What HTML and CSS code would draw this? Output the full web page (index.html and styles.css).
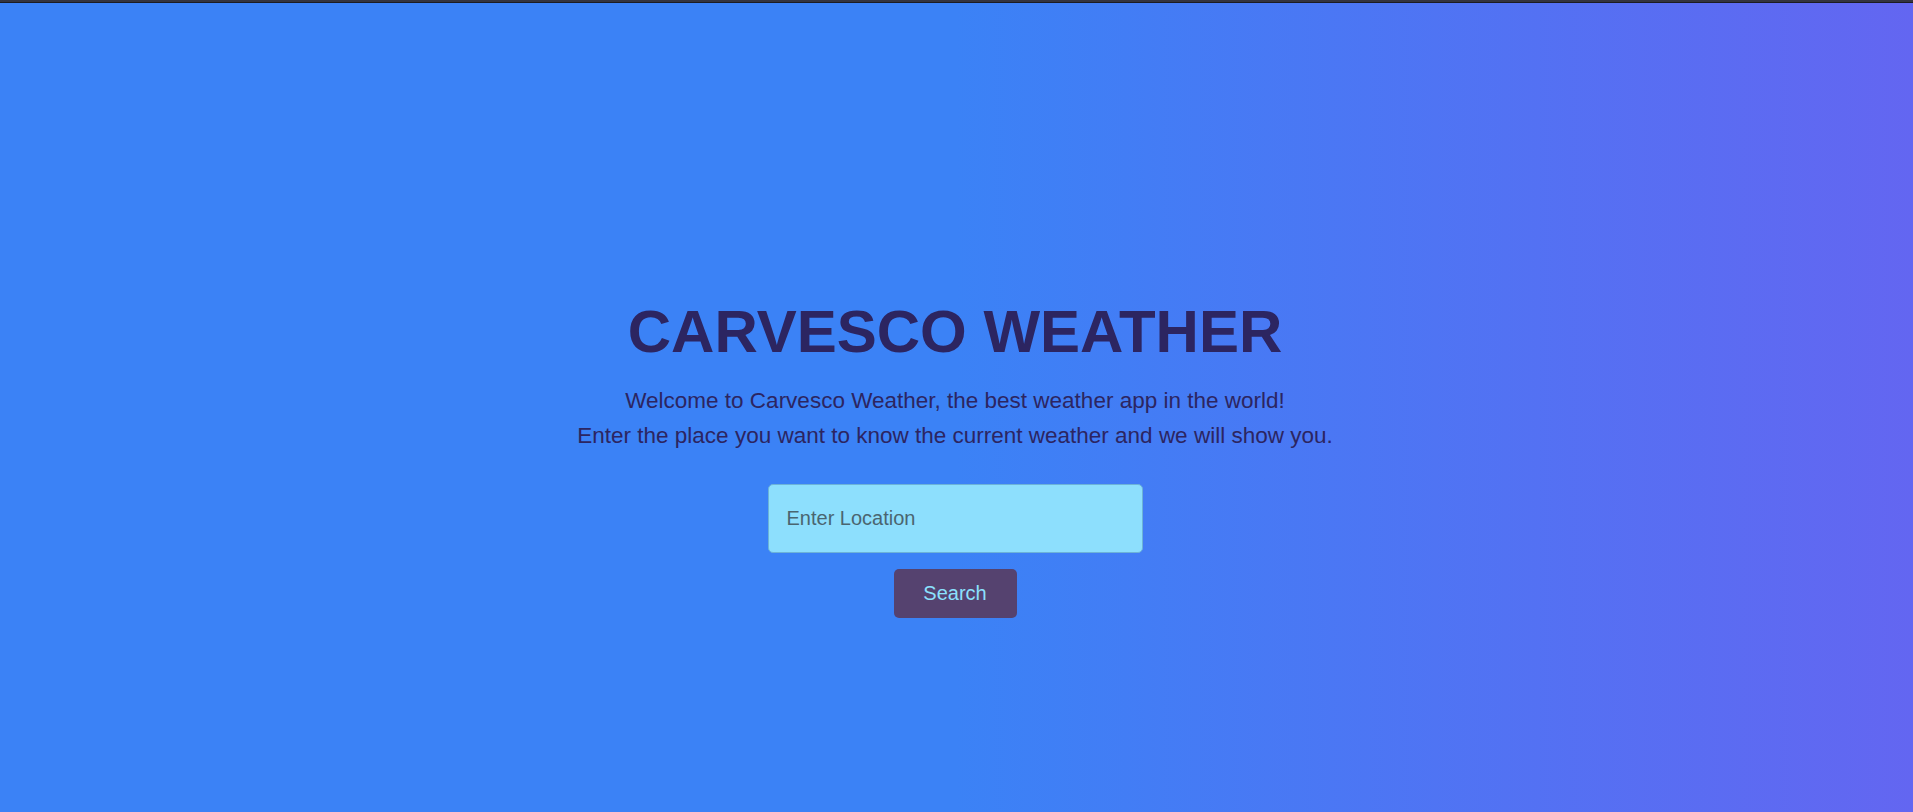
FILE: index.html
```html
<!DOCTYPE html>
<html lang="en">
<head>
<meta charset="utf-8">
<title>Carvesco Weather</title>
<link rel="stylesheet" href="styles.css">
</head>
<body>
<div class="topbar"></div>
<main class="hero">
  <h1 class="title">CARVESCO WEATHER</h1>
  <p class="intro">Welcome to Carvesco Weather, the best weather app in the world!<br>Enter the place you want to know the current weather and we will show you.</p>
  <form class="search" onsubmit="return false;">
    <input class="location" type="text" placeholder="Enter Location">
    <button class="search-btn" type="submit">Search</button>
  </form>
</main>
</body>
</html>
```
FILE: styles.css
```css
html, body {
  margin: 0;
  padding: 0;
}
body {
  min-height: 100vh;
  background: linear-gradient(to right, #3b82f6 50%, #6366f1 100%);
  font-family: "Liberation Sans", Arial, sans-serif;
  color: #2c2561;
}
.topbar {
  height: 2px;
  background: #34343f;
  border-bottom: 1px solid #1c1c22;
}
.hero {
  display: flex;
  flex-direction: column;
  align-items: center;
  text-align: center;
  padding-top: 299px;
  padding-right: 3px;
}
.title {
  margin: 0;
  font-size: 60px;
  line-height: 60px;
  font-weight: 700;
  color: #2c2561;
}
.intro {
  margin: 21px 0 0;
  font-size: 22.5px;
  line-height: 35.3px;
  color: #2c2561;
}
.search {
  display: flex;
  flex-direction: column;
  align-items: center;
  margin-top: 30px;
}
.location {
  box-sizing: border-box;
  width: 375px;
  height: 69px;
  padding: 0 18px;
  background: #8ddffd;
  border: 1px solid #6cb3d8;
  border-radius: 5px;
  font-family: "Liberation Sans", Arial, sans-serif;
  font-size: 20px;
  color: #2d4a55;
  outline: none;
}
.location::placeholder {
  color: #4a6570;
  opacity: 1;
}
.search-btn {
  box-sizing: border-box;
  margin-top: 16px;
  width: 123px;
  height: 49px;
  padding: 0;
  border: none;
  border-radius: 5px;
  background: #55426f;
  color: #8be0fd;
  font-family: "Liberation Sans", Arial, sans-serif;
  font-size: 20px;
  cursor: pointer;
}
```
